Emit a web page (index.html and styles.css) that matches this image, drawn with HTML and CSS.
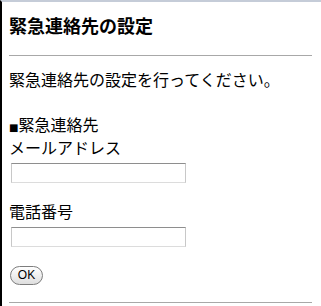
FILE: index.html
```html
<!DOCTYPE html>
<html lang="ja">

<head>
  <meta charset="UTF-8">
  <meta name="viewport" content="width=device-width, initial-scale=1.0">
  <title>緊急連絡先の設定</title>
  <link rel="stylesheet" href="styles.css">
</head>

<body>
  <h1 class="title">緊急連絡先の設定</h1>
  <hr class="rule">
  <p class="lead">緊急連絡先の設定を行ってください。</p>

  <form class="contact-form" onsubmit="return false">
    <div class="section"><span class="mark">■</span>緊急連絡先</div>
    <label class="field">
      <span class="field-label">メールアドレス</span>
      <input type="text" class="text-input" name="mail">
    </label>
    <label class="field">
      <span class="field-label">電話番号</span>
      <input type="text" class="text-input" name="tel">
    </label>
    <button type="submit" class="ok-button">OK</button>
  </form>
  <hr class="rule">
</body>

</html>
```

FILE: styles.css
```css
html {
  background: #fff;
}

body {
  box-sizing: border-box;
  min-height: 100vh;
  margin: 0;
  padding: 0 9px 0 7px;
  border-top: 2px solid #c5ccd8;
  border-left: 2px solid #000;
  font-family: "Noto Sans CJK JP", sans-serif;
  font-size: 16px;
  line-height: 23px;
  color: #000;
}

.title {
  margin: 10px 0 17px;
  font-size: 18px;
  line-height: 26px;
  font-weight: bold;
}

.rule {
  height: 0;
  margin: 0;
  border: none;
  border-top: 1px solid #a8a8a8;
}

.lead {
  margin: 12px 0 22px;
}

.contact-form {
  margin: 0 0 17px;
}

.section {
  height: 23px;
}

.mark {
  font-family: "DejaVu Sans", sans-serif;
  font-size: 10px;
  line-height: 0;
}

.field {
  display: block;
}

.field-label {
  display: block;
}

.field + .field {
  margin-top: 17px;
}

.text-input {
  display: block;
  box-sizing: border-box;
  width: 175px;
  height: 20px;
  margin: 4px 0 0 2px;
  padding: 1px 3px;
  border: 1px solid #c8c8c8;
  border-top-color: #8e8e8e;
  border-bottom-color: #dcdcdc;
  background: #fff;
  font-size: 13px;
}

.ok-button {
  display: block;
  box-sizing: border-box;
  width: 33px;
  height: 19px;
  margin: 19px 0 0 1px;
  padding: 0;
  border: 1px solid #7d7d7d;
  border-radius: 10px;
  background: linear-gradient(#ffffff, #ececec 60%, #dedede);
  font-family: "Liberation Sans", Arial, sans-serif;
  font-size: 12px;
  line-height: 17px;
  color: #000;
}
```
